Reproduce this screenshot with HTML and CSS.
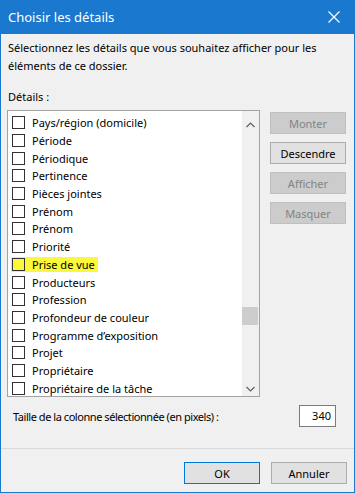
FILE: index.html
```html
<!DOCTYPE html>
<html lang="fr">
<head>
  <meta charset="UTF-8" />
  <title>Choisir les détails</title>
  <link rel="stylesheet" href="styles.css">
</head>
<body>
  <div class="fenetre">
    <div class="titre">
      <span>Choisir les détails</span>
      <svg class="fermer" width="12" height="12" viewBox="0 0 12 12">
        <path d="M0.5 0.5 L11.5 11.5 M11.5 0.5 L0.5 11.5" stroke="#fff" stroke-width="1.2" fill="none"/>
      </svg>
    </div>

    <div class="contenu">
      <p class="intro">Sélectionnez les détails que vous souhaitez afficher pour les éléments de ce dossier.</p>
      <p class="label">Détails :</p>

      <div class="zone">
        <div class="liste">
          <ul class="items">
            <li><span class="case"></span>Pays/région (domicile)</li>
            <li><span class="case"></span>Période</li>
            <li><span class="case"></span>Périodique</li>
            <li><span class="case"></span>Pertinence</li>
            <li><span class="case"></span>Pièces jointes</li>
            <li><span class="case"></span>Prénom</li>
            <li><span class="case"></span>Prénom</li>
            <li><span class="case"></span>Priorité</li>
            <li><span class="surligne"><span class="case"></span>Prise de vue</span></li>
            <li><span class="case"></span>Producteurs</li>
            <li><span class="case"></span>Profession</li>
            <li><span class="case"></span>Profondeur de couleur</li>
            <li><span class="case"></span>Programme d’exposition</li>
            <li><span class="case"></span>Projet</li>
            <li><span class="case"></span>Propriétaire</li>
            <li><span class="case"></span>Propriétaire de la tâche</li>
          </ul>
          <div class="defil">
            <svg width="9" height="6" viewBox="0 0 9 6"><path d="M0.5 5 L4.5 1 L8.5 5" stroke="#606060" stroke-width="1.2" fill="none"/></svg>
            <div class="piste"><div class="curseur"></div></div>
            <svg width="9" height="6" viewBox="0 0 9 6"><path d="M0.5 1 L4.5 5 L8.5 1" stroke="#606060" stroke-width="1.2" fill="none"/></svg>
          </div>
        </div>

        <div class="actions">
          <button class="inactif">Monter</button>
          <button>Descendre</button>
          <button class="inactif">Afficher</button>
          <button class="inactif">Masquer</button>
        </div>
      </div>

      <div class="taille">
        <span class="taille-texte">Taille de la colonne sélectionnée (en pixels) :</span>
        <div class="champ">340</div>
      </div>
    </div>

    <div class="pied">
      <button class="ok">OK</button>
      <button>Annuler</button>
    </div>
  </div>
</body>
</html>
```

FILE: styles.css
```css
body {
  margin: 0;
  font-family: "Noto Sans", "Open Sans", sans-serif;
  font-size: 11px;
  color: #000;
}
.fenetre {
  width: 355px;
  height: 493px;
  box-sizing: border-box;
  background-color: #f0f0f0;
  border: 1px solid #1a79cf;
  border-top: none;
  display: flex;
  flex-direction: column;
}
.titre {
  height: 34px;
  background-color: #1a79cf;
  color: #fff;
  font-size: 13px;
  display: flex;
  align-items: center;
  justify-content: space-between;
  padding: 0 15px 0 8px;
  margin: 0 -1px;
}
.titre span {
  margin-top: -1px;
}
.contenu {
  padding: 5px 7px 0 6px;
}
.intro {
  margin: 0;
  line-height: 18px;
  padding-left: 1px;
}
.label {
  margin: 13px 0 0 1px;
  line-height: 18px;
}
.zone {
  display: flex;
  align-items: flex-start;
  margin-top: 4px;
}
.liste {
  width: 253px;
  height: 287px;
  box-sizing: border-box;
  border: 1px solid #a3a3a3;
  background: #fff;
  display: flex;
}
.items {
  flex: 1;
  list-style: none;
  margin: 0;
  padding: 3px 0 0 4px;
}
.items li {
  height: 17.7px;
  display: flex;
  align-items: center;
}
.case {
  width: 11px;
  height: 11px;
  border: 1px solid #333;
  background: #fff;
  margin-right: 7px;
  flex-shrink: 0;
}
.surligne {
  display: flex;
  align-items: center;
  background: #fbf73a;
  padding-right: 3px;
  margin-left: -1px;
  padding-left: 1px;
}
.surligne .case {
  background: #fbf73a;
}
.defil {
  width: 17px;
  background: #f0f0f0;
  display: flex;
  flex-direction: column;
  align-items: center;
  padding: 11px 0 4px;
}
.piste {
  flex: 1;
  width: 17px;
  position: relative;
}
.curseur {
  position: absolute;
  left: 0;
  right: 1px;
  top: 179px;
  height: 18px;
  background: #cdcdcd;
}
.defil svg {
  margin: 0 1px 0 0;
}
.actions {
  display: flex;
  flex-direction: column;
  gap: 8px;
  margin-left: 10px;
  margin-top: 2px;
}
button {
  font-family: inherit;
  font-size: 11px;
  width: 76px;
  height: 22px;
  padding: 0;
  background-color: #e1e1e1;
  border: 1px solid #adadad;
  color: #000;
}
button.inactif {
  background-color: #cccccc;
  border-color: #bfbfbf;
  color: #838383;
}
.taille {
  display: flex;
  align-items: center;
  justify-content: space-between;
  margin: 8px 11px 0 6px;
}
.taille-texte {
  letter-spacing: -0.45px;
}
.champ {
  width: 37px;
  height: 22px;
  box-sizing: border-box;
  border: 1px solid #7a7a7a;
  background: #fff;
  text-align: right;
  padding: 1px 4px 0 0;
  line-height: 18px;
}
.pied {
  margin-top: auto;
  border-top: 1px solid #d9d9d9;
  display: flex;
  justify-content: flex-end;
  gap: 11px;
  padding: 13px 7px 8px 0;
}
.pied button {
  height: 22px;
}
button.ok {
  border-color: #0078d7;
}
```
